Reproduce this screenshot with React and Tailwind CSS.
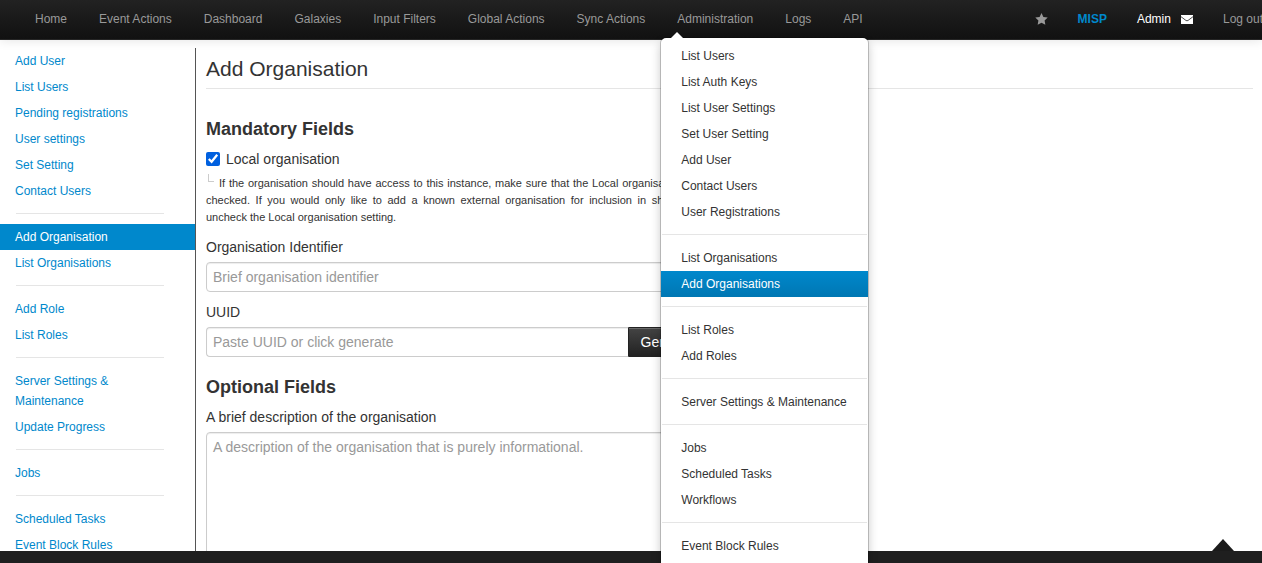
import React from "react";

const NAV = ["Home", "Event Actions", "Dashboard", "Galaxies", "Input Filters", "Global Actions", "Sync Actions", "Administration", "Logs", "API"];

const ADMIN_MENU = [
  ["List Users", "List Auth Keys", "List User Settings", "Set User Setting", "Add User", "Contact Users", "User Registrations"],
  ["List Organisations", "Add Organisations"],
  ["List Roles", "Add Roles"],
  ["Server Settings & Maintenance"],
  ["Jobs", "Scheduled Tasks", "Workflows"],
  ["Event Block Rules"],
];

const SIDE_MENU = [
  ["Add User", "List Users", "Pending registrations", "User settings", "Set Setting", "Contact Users"],
  ["Add Organisation", "List Organisations"],
  ["Add Role", "List Roles"],
  ["Server Settings & Maintenance", "Update Progress"],
  ["Jobs"],
  ["Scheduled Tasks", "Event Block Rules"],
];

function AdminDropdown() {
  return (
    <div className="absolute top-[37px] -left-px w-[209px] rounded-md border border-black/20 bg-white bg-clip-padding pt-[5px] pb-10 shadow-[0_5px_10px_rgba(0,0,0,0.2)]">
      <svg className="absolute -top-[6px] left-[10px] h-[6px] w-3" viewBox="0 0 12 6" aria-hidden="true">
        <path d="M0 6L6 0l6 6z" fill="#fff" />
      </svg>
      {ADMIN_MENU.map((group, i) => (
        <ul key={i} className={i > 0 ? "relative mt-[9px] pt-[11px] before:absolute before:inset-x-px before:top-0 before:h-px before:bg-[#e5e5e5]" : ""}>
          {group.map((item) => (
            <li key={item}>
              <a
                href="#"
                className={
                  "block px-5 py-[3px] leading-5 whitespace-nowrap " +
                  (item === "Add Organisations" ? "bg-linear-to-b from-[#0088cc] to-[#0077b3] text-white" : "text-[#333]")
                }
              >
                {item}
              </a>
            </li>
          ))}
        </ul>
      ))}
    </div>
  );
}

function TopBar() {
  return (
    <header className="relative z-20 flex h-10 shrink-0 items-start border-b border-[#252525] bg-linear-to-b from-[#222] to-[#111] pl-[19px] text-xs text-[#999] shadow-[0_1px_10px_rgba(0,0,0,0.1)]">
      <nav className="shrink-0">
        <ul className="flex">
          {NAV.map((item) => (
            <li key={item} className="relative">
              <a href="#" className="block px-4 py-[9px] leading-5 whitespace-nowrap">{item}</a>
              {item === "Administration" && <AdminDropdown />}
            </li>
          ))}
        </ul>
      </nav>
      <div className="-mr-px ml-auto flex shrink-0 items-center gap-[30px] py-[9px] leading-5 whitespace-nowrap">
        <a href="#" aria-label="Bookmark">
          <svg className="h-3 w-[13px]" viewBox="0 0 13 12" aria-hidden="true">
            <path d="M6.500 0l1.900 3.900 4.300.6-3.100 3 .75 4.300-3.850-2-3.850 2 .75-4.300-3.100-3 4.300-.6z" fill="#999" />
          </svg>
        </a>
        <a href="#" className="font-bold text-[#0088cc]">MISP</a>
        <a href="#" className="flex items-center gap-[10px] text-white">
          Admin
          <svg className="h-[9px] w-3" viewBox="0 0 12 9" aria-hidden="true">
            <path d="M0 0h12v9H0z" fill="#fff" />
            <path d="M0 1.700l4.900 3.700q1.100.8 2.200 0L12 1.700" fill="none" stroke="#222" strokeWidth="0.8" />
          </svg>
        </a>
        <a href="#">Log out</a>
      </div>
    </header>
  );
}

function Sidebar() {
  return (
    <nav className="mt-2 w-[195px] shrink-0 text-xs">
      {SIDE_MENU.map((group, i) => (
        <ul key={i} className={i > 0 ? "relative mt-[9px] pt-[11px] before:absolute before:top-0 before:right-[31px] before:left-4 before:h-px before:bg-[#e5e5e5]" : ""}>
          {group.map((item) => (
            <li key={item}>
              <a
                href="#"
                className={
                  "block py-[3px] pr-10 pl-[15px] leading-5 " +
                  (item === "Add Organisation" ? "bg-[#0088cc] text-white" : "text-[#0088cc]")
                }
              >
                {item}
              </a>
            </li>
          ))}
        </ul>
      ))}
    </nav>
  );
}

const FIELD =
  "block rounded border border-[#ccc] bg-white px-[6px] py-1 text-sm leading-5 text-[#555] shadow-[inset_0_1px_1px_rgba(0,0,0,0.075)] placeholder:text-[#999] focus:outline-none";

function OrganisationForm() {
  return (
    <form className="text-sm leading-5">
      <h1 className="mb-5 border-b border-[#e5e5e5] pt-[2px] text-[21px] leading-[38px]">Add Organisation</h1>
      <div className="max-w-[544px]">
        <h2 className="text-lg leading-10 font-bold">Mandatory Fields</h2>
        <div className="flex items-center gap-[6px]">
          <input id="local" type="checkbox" defaultChecked className="h-[14px] w-[14px] accent-[#0060df]" />
          <label htmlFor="local">Local organisation</label>
        </div>
        <p className="mt-[5px] mb-[11px] max-w-[524px] text-justify text-[11px] leading-[17px]">
          <span className="mr-[5px] ml-[2px] inline-block h-2 w-[6px] border-b border-l border-[#ccc] align-[5px] leading-none" />
          If the organisation should have access to this instance, make sure that the Local organisation setting is
          checked. If you would only like to add a known external organisation for inclusion in sharing groups,
          uncheck the Local organisation setting.
        </p>
        <label htmlFor="name" className="mb-[5px] block">Organisation Identifier</label>
        <input id="name" type="text" placeholder="Brief organisation identifier" className={FIELD + " mb-[10px] w-full"} />
        <label htmlFor="uuid" className="mb-[5px] block">UUID</label>
        <div className="mb-[10px] flex">
          <input id="uuid" type="text" placeholder="Paste UUID or click generate" className={FIELD + " min-w-0 flex-1 rounded-r-none border-r-0"} />
          <button
            type="button"
            className="rounded-r border border-[#222] bg-linear-to-b from-[#444] to-[#222] px-3 py-1 text-white shadow-[inset_0_1px_0_rgba(255,255,255,0.2)]"
          >
            Generate UUID
          </button>
        </div>
        <h2 className="text-lg leading-10 font-bold">Optional Fields</h2>
        <label htmlFor="description" className="mb-[5px] block">A brief description of the organisation</label>
        <textarea
          id="description"
          rows={8}
          placeholder="A description of the organisation that is purely informational."
          className={FIELD + " w-full resize-none"}
        />
      </div>
    </form>
  );
}

export default function App() {
  return (
    <div className="flex h-screen flex-col overflow-hidden bg-white font-['Liberation_Sans',Arial,sans-serif] text-[#333]">
      <TopBar />
      <div className="flex min-h-0 flex-1 overflow-hidden">
        <Sidebar />
        <main className="mt-2 min-w-0 flex-1 border-l border-[#555] pr-[9px] pl-[10px]">
          <OrganisationForm />
        </main>
      </div>
      <footer className="relative h-3 shrink-0 bg-[#1f1f1f]">
        <a href="#" aria-label="Back to top" className="absolute right-7 bottom-full">
          <svg className="block h-3 w-[22px]" viewBox="0 0 22 12" aria-hidden="true">
            <path d="M0 12L11 0l11 12z" fill="#1b1b1b" />
          </svg>
        </a>
      </footer>
    </div>
  );
}
